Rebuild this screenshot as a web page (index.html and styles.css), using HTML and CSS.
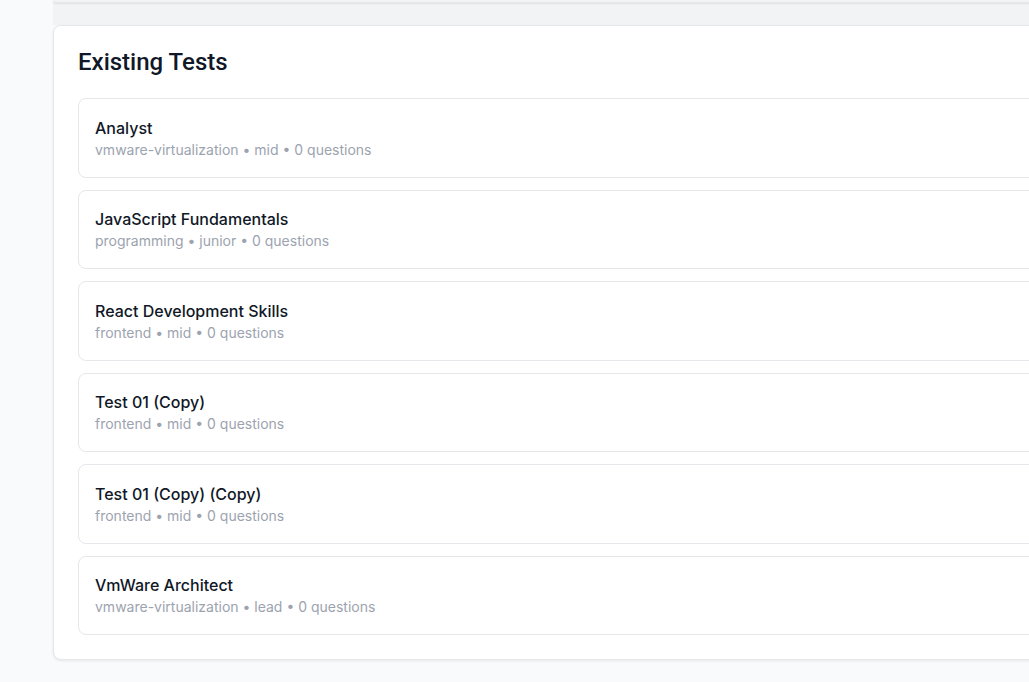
FILE: index.html
```html
<!DOCTYPE html>
<html>
<head>
<meta charset="utf-8">
<link rel="stylesheet" href="styles.css">
</head>
<body>
<div class="page">
  <div class="main">
    <div class="top-block"><div class="top-card-edge"></div></div>
    <section class="card">
      <h2 class="card-title">Existing Tests</h2>
      <ul class="test-list">
        <li class="test-item">
          <div class="test-name">Analyst</div>
          <div class="test-meta">vmware-virtualization • mid • 0 questions</div>
        </li>
        <li class="test-item">
          <div class="test-name">JavaScript Fundamentals</div>
          <div class="test-meta">programming • junior • 0 questions</div>
        </li>
        <li class="test-item">
          <div class="test-name">React Development Skills</div>
          <div class="test-meta">frontend • mid • 0 questions</div>
        </li>
        <li class="test-item">
          <div class="test-name">Test 01 (Copy)</div>
          <div class="test-meta">frontend • mid • 0 questions</div>
        </li>
        <li class="test-item">
          <div class="test-name">Test 01 (Copy) (Copy)</div>
          <div class="test-meta">frontend • mid • 0 questions</div>
        </li>
        <li class="test-item">
          <div class="test-name">VmWare Architect</div>
          <div class="test-meta">vmware-virtualization • lead • 0 questions</div>
        </li>
      </ul>
    </section>
  </div>
</div>
</body>
</html>
```

FILE: styles.css
```css
* { box-sizing: border-box; }
html, body {
  margin: 0;
  padding: 0;
  background: #f9fafb;
  font-family: Inter, "Liberation Sans", Arial, sans-serif;
  overflow: hidden;
}
.page {
  width: 1029px;
  height: 682px;
  overflow: hidden;
}
.main {
  margin-left: 53px;
  width: 1200px;
}
.top-block {
  height: 25px;
  background: #f2f3f5;
}
.top-card-edge {
  height: 3px;
  background: #f2f3f5;
  border-bottom-left-radius: 6px;
  box-shadow: 0 1px 2px rgba(0,0,0,0.08);
  border-bottom: 1px solid #e6e7ea;
}
.card {
  background: #ffffff;
  border: 1px solid #e5e7eb;
  border-radius: 8px;
  box-shadow: 0 1px 3px rgba(0,0,0,0.08);
  padding: 22px 24px 24px 24px;
}
.card-title {
  margin: 0 0 22px 0;
  font-family: Roboto, Inter, "Liberation Sans", Arial, sans-serif;
  font-size: 24px;
  line-height: 28px;
  font-weight: 500;
  color: #111827;
}
.test-list {
  list-style: none;
  margin: 0;
  padding: 0;
  display: flex;
  flex-direction: column;
  gap: 12px;
}
.test-item {
  border: 1px solid #e5e7eb;
  border-radius: 8px;
  padding: 16.75px 16px;
  background: #ffffff;
}
.test-name {
  font-size: 16px;
  line-height: 24px;
  font-weight: 500;
  color: #111827;
}
.test-meta {
  font-size: 14px;
  line-height: 20px;
  color: #9ca3af;
}
```
